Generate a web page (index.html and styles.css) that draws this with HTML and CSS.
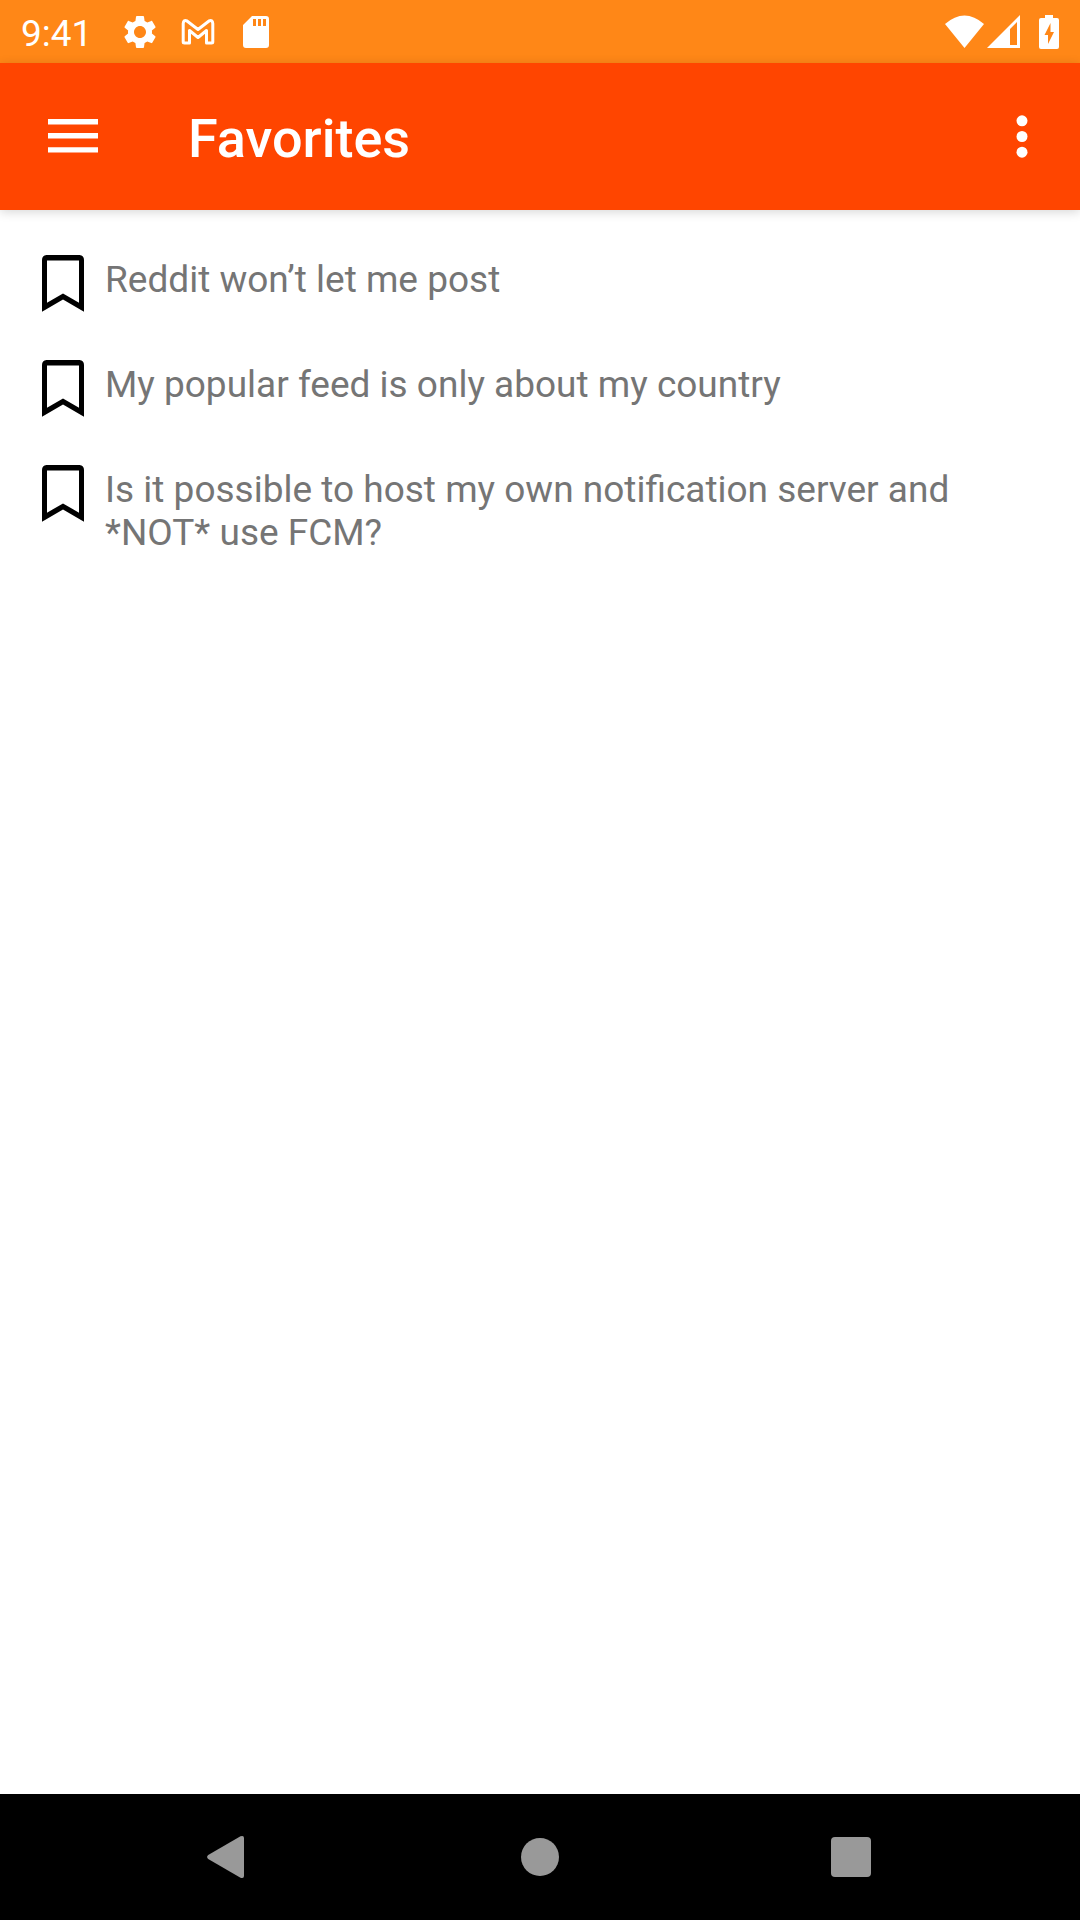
FILE: index.html
```html
<!DOCTYPE html>
<html lang="en">
<head>
<meta charset="utf-8">
<meta name="viewport" content="width=device-width, initial-scale=1">
<title>Favorites</title>
<link rel="stylesheet" href="styles.css">
</head>
<body>
<svg class="sprite" aria-hidden="true">
  <symbol id="bookmark" viewBox="0 0 63 63">
    <path fill="#000" fill-rule="evenodd" d="M15.500 3H48.500Q53 3.500 53 8V59.700L32 47.500L11 59.700V8Q11 3.500 15.500 3ZM16 8.400V50.700L32 41.400L48 50.700V8.400Z"/>
  </symbol>
</svg>
<div class="status">
  <div class="status-left">
    <time class="clock">9:41</time>
    <svg class="status-icon" viewBox="0 0 24 24" aria-hidden="true"><path fill="#fff" d="M19.140 12.940c.04-.3.06-.61.06-.94 0-.32-.02-.64-.07-.94l2.030-1.580c.18-.14.23-.41.12-.61l-1.920-3.320c-.12-.22-.37-.29-.59-.22l-2.390.96c-.5-.38-1.030-.7-1.620-.94l-.36-2.540c-.04-.24-.24-.41-.48-.41h-3.840c-.24 0-.43.17-.47.41l-.36 2.540c-.59.24-1.130.57-1.620.94l-2.390-.96c-.22-.08-.47 0-.59.22L2.740 8.870c-.12.21-.08.47.12.61l2.030 1.580c-.05.3-.09.63-.09.94s.02.64.07.94l-2.030 1.580c-.18.14-.23.41-.12.61l1.920 3.320c.12.22.37.29.59.22l2.390-.96c.5.38 1.030.7 1.620.94l.36 2.540c.05.24.24.41.48.41h3.840c.24 0 .44-.17.47-.41l.36-2.540c.59-.24 1.130-.56 1.620-.94l2.390.96c.22.08.47 0 .59-.22l1.920-3.320c.12-.22.07-.47-.12-.61l-2.010-1.580zM12 15.600c-1.980 0-3.600-1.620-3.600-3.600s1.620-3.600 3.600-3.600 3.600 1.620 3.600 3.600-1.620 3.600-3.600 3.600z"/></svg>
    <svg class="status-icon" viewBox="0 0 40 40" aria-hidden="true"><path fill="none" stroke="#fff" stroke-width="3" stroke-linejoin="round" d="M5.200 30V11.500Q5.500 7.500 9 9L20 17.500L31 9Q34.500 7.500 34.800 11.500V30Q34.800 31 33.500 31H28.500V18.500L20 25.500L11.500 18.500V31H6.500Q5.200 31 5.200 30Z"/></svg>
    <svg class="status-icon" viewBox="0 0 40 40" aria-hidden="true"><path fill="#fff" fill-rule="evenodd" d="M16 4H30Q33 4 33 7V33Q33 36 30 36H10Q7 36 7 33V13ZM17 7V14H20V7ZM22 7V14H25V7ZM27 7V14H30V7Z"/></svg>
  </div>
  <div class="status-right">
    <svg class="wifi" viewBox="0 0 40 34" aria-hidden="true"><path fill="#fff" d="M19.500 33L0 9Q19.500-8 39 9Z"/></svg>
    <svg class="signal" viewBox="0 0 34 34" aria-hidden="true"><path fill="#fff" fill-rule="evenodd" d="M0 33L33 0V33ZM23 14V30H30V7Z"/></svg>
    <svg class="battery" viewBox="0 0 20 34" aria-hidden="true"><path fill="#fff" fill-rule="evenodd" d="M6 0H14V3H18Q20 3 20 5V32Q20 34 18 34H2Q0 34 0 32V5Q0 3 2 3H6ZM11.500 8L5.500 20H9V29L15 17H11.500Z"/></svg>
  </div>
</div>
<header class="appbar">
  <button class="bar-button menu" type="button" aria-label="Open navigation">
    <svg class="menu-icon" viewBox="0 0 50 36" aria-hidden="true"><path fill="#fff" d="M0 0H50V5.400H0ZM0 14H50V19.400H0ZM0 28.200H50V33.600H0Z"/></svg>
  </button>
  <h1 class="title">Favorites</h1>
  <button class="bar-button more" type="button" aria-label="More options">
    <svg class="more-icon" viewBox="0 0 12 44" aria-hidden="true"><g fill="#fff"><circle cx="6" cy="5.800" r="5.500"/><circle cx="6" cy="21.500" r="5.500"/><circle cx="6" cy="37.200" r="5.500"/></g></svg>
  </button>
</header>
<main class="content">
  <ul class="favorites">
    <li class="favorite"><button class="save" type="button" aria-label="Saved"><svg class="save-icon"><use href="#bookmark"/></svg></button><a class="post" href="#">Reddit won’t let me post</a></li>
    <li class="favorite"><button class="save" type="button" aria-label="Saved"><svg class="save-icon"><use href="#bookmark"/></svg></button><a class="post" href="#">My popular feed is only about my country</a></li>
    <li class="favorite"><button class="save" type="button" aria-label="Saved"><svg class="save-icon"><use href="#bookmark"/></svg></button><a class="post" href="#">Is it possible to host my own notification server and *NOT* use FCM?</a></li>
  </ul>
</main>
<nav class="system-nav" aria-label="System">
  <button class="nav-button" type="button" aria-label="Back"><svg class="nav-icon" viewBox="0 0 44 44" aria-hidden="true"><path fill="#999" d="M1.200 20L33.500 1.300Q37 0 37 3V41Q37 44 33.500 42.700L1.200 24Q-1 22 1.200 20Z"/></svg></button>
  <button class="nav-button" type="button" aria-label="Home"><svg class="nav-icon" viewBox="0 0 44 44" aria-hidden="true"><circle cx="22" cy="22" r="19" fill="#999"/></svg></button>
  <button class="nav-button" type="button" aria-label="Recent apps"><svg class="nav-icon" viewBox="0 0 44 44" aria-hidden="true"><rect x="2" y="2" width="40" height="40" rx="4" fill="#999"/></svg></button>
</nav>
</body>
</html>
```
FILE: styles.css
```css
* {
  box-sizing: border-box;
}

body {
  display: flex;
  flex-direction: column;
  min-height: 100vh;
  margin: 0;
  background: #fff;
  color: #757575;
  font-family: Roboto, sans-serif;
  font-size: 37px;
  line-height: 43px;
}

button {
  display: flex;
  align-items: center;
  justify-content: center;
  padding: 0;
  border: 0;
  background: none;
}

svg {
  display: block;
  flex: none;
}

.sprite {
  position: absolute;
  width: 0;
  height: 0;
}

.status {
  display: flex;
  align-items: center;
  justify-content: space-between;
  height: 63px;
  padding: 0 21px;
  background: #ff8717;
  color: #fff;
}

.status-left {
  display: flex;
  align-items: center;
  gap: 18px;
}

.clock {
  width: 81px;
  padding-top: 4px;
}

.status-icon {
  width: 40px;
  height: 40px;
}

.status-right {
  display: flex;
  align-items: center;
  gap: 2px;
}

.wifi {
  width: 40px;
  height: 34px;
}

.signal {
  width: 34px;
  height: 34px;
}

.battery {
  width: 20px;
  height: 34px;
  margin-left: 16px;
}

.appbar {
  display: flex;
  align-items: center;
  height: 147px;
  background: #ff4500;
  color: #fff;
  box-shadow: 0 2px 10px rgba(0, 0, 0, 0.16);
}

.bar-button {
  height: 100%;
}

.menu {
  width: 146px;
}

.menu-icon {
  width: 50px;
  height: 36px;
}

.title {
  flex: 1;
  margin: 0;
  padding: 4px 0 0 42px;
  font-size: 54px;
  font-weight: 500;
  line-height: 62px;
}

.more {
  width: 116px;
}

.more-icon {
  width: 12px;
  height: 44px;
}

.content {
  flex: 1;
}

.favorites {
  display: grid;
  gap: 42px;
  margin: 0;
  padding: 42px 31px;
  list-style: none;
}

.favorite {
  display: flex;
  align-items: flex-start;
  gap: 11px;
}

.save-icon {
  width: 63px;
  height: 63px;
}

.post {
  flex: 1;
  padding-top: 6px;
  color: inherit;
  text-decoration: none;
}

.system-nav {
  display: flex;
  height: 126px;
  padding: 0 73px;
  background: #000;
}

.nav-button {
  flex: 1;
}

.nav-icon {
  width: 44px;
  height: 44px;
}
```
